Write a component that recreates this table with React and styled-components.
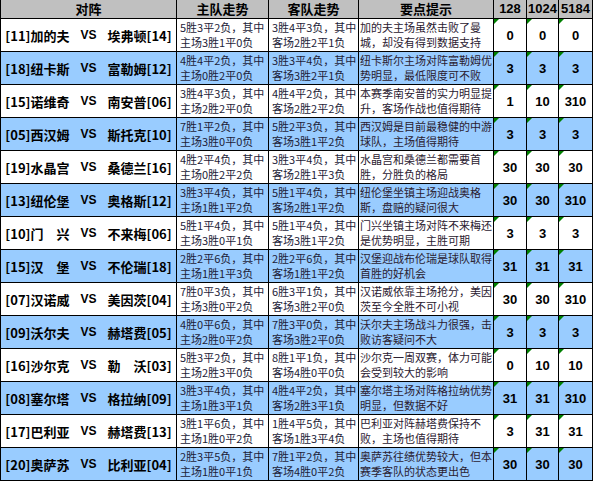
import React from "react";
import styled, { createGlobalStyle, css } from "styled-components";

const Global = createGlobalStyle`
  html, body { margin: 0; padding: 0; background: #fff; }
  body { font-family: "Noto Sans CJK SC", "Liberation Sans", sans-serif; }
`;

const Table = styled.div`
  width: 593px;
  box-sizing: border-box;
  display: flex;
  flex-direction: column;
  gap: 1px;
  background: #000;
  padding: 0 1px 1px 1px;
`;

const Row = styled.div`
  display: grid;
  grid-template-columns: 175px 91px 89px 134px 32px 31px 33px;
  column-gap: 1px;
  height: ${(p) => (p.$head ? "18px" : "32px")};
`;

const bgFor = (p) => (p.$head ? "#c0c0c0" : p.$blue ? "#99ccff" : "#ffffff");

const HeadCell = styled.div`
  background: #c0c0c0;
  display: flex;
  align-items: center;
  justify-content: center;
  font-weight: 700;
  font-size: 13px;
  line-height: 18px;
  color: #000;
  font-family: ${(p) => (p.$num ? '"Liberation Sans", Arial, sans-serif' : '"Noto Sans CJK SC", sans-serif')};
  ${(p) => p.$num && css`font-size: 13px;`}
`;

const TeamCell = styled.div`
  background: ${bgFor};
  display: grid;
  grid-template-columns: 1fr auto 1fr;
  column-gap: 11px;
  align-items: center;
  font-weight: 700;
  font-size: 13px;
  color: #000;
  font-family: "Noto Sans CJK SC", sans-serif;
  white-space: nowrap;
`;

const Home = styled.span`
  justify-self: end;
`;
const Vs = styled.span`
  font-family: "Liberation Sans", Arial, sans-serif;
  font-size: 12px;
`;
const Away = styled.span`
  justify-self: start;
`;

const TextCell = styled.div`
  background: ${bgFor};
  display: flex;
  flex-direction: column;
  justify-content: center;
  padding-left: ${(p) => (p.$tip ? "1px" : "3px")};
  font-size: 11px;
  line-height: 15px;
  color: ${(p) => (p.$tip ? "#2a2030" : "#1c1c38")};
  white-space: nowrap;
  overflow: hidden;
`;

const Line = styled.span`
  display: block;
  height: 15px;
`;

const NumCell = styled.div`
  position: relative;
  background: ${bgFor};
  display: flex;
  align-items: center;
  justify-content: center;
  font-family: "Liberation Sans", Arial, sans-serif;
  font-weight: 700;
  font-size: 13px;
  color: #000;
  &::before {
    content: "";
    position: absolute;
    top: 0;
    left: 0;
    border-top: 5px solid #008000;
    border-right: 5px solid transparent;
  }
`;

const data = [
  ["[11]加的夫", "埃弗顿[14]", ["5胜3平2负，其中", "主场3胜1平0负"], ["3胜4平3负，其中", "客场2胜2平1负"], ["加的夫主场虽然击败了曼", "城，却没有得到数据支持"], ["0", "0", "0"]],
  ["[18]纽卡斯", "富勒姆[12]", ["4胜4平2负，其中", "主场0胜2平0负"], ["3胜3平4负，其中", "客场3胜2平1负"], ["纽卡斯尔主场对阵富勒姆优", "势明显，最低限度可不败"], ["3", "3", "3"]],
  ["[15]诺维奇", "南安普[06]", ["3胜4平3负，其中", "主场2胜2平0负"], ["4胜4平2负，其中", "客场2胜2平2负"], ["本赛季南安普的实力明显提", "升，客场作战也值得期待"], ["1", "10", "310"]],
  ["[05]西汉姆", "斯托克[10]", ["7胜1平2负，其中", "主场3胜0平0负"], ["5胜2平3负，其中", "客场3胜1平2负"], ["西汉姆是目前最稳健的中游", "球队，主场值得期待"], ["3", "3", "3"]],
  ["[19]水晶宫", "桑德兰[16]", ["4胜2平4负，其中", "主场0胜2平2负"], ["3胜3平4负，其中", "客场2胜1平3负"], ["水晶宫和桑德兰都需要首", "胜，分胜负的格局"], ["30", "30", "30"]],
  ["[13]纽伦堡", "奥格斯[12]", ["3胜3平4负，其中", "主场1胜1平2负"], ["5胜1平4负，其中", "客场2胜1平2负"], ["纽伦堡坐镇主场迎战奥格", "斯，盘赔的疑问很大"], ["30", "30", "310"]],
  ["[10]门\u3000兴", "不来梅[06]", ["5胜1平4负，其中", "主场3胜0平1负"], ["5胜1平4负，其中", "客场3胜1平2负"], ["门兴坐镇主场对阵不来梅还", "是优势明显，主胜可期"], ["3", "3", "3"]],
  ["[15]汉\u3000堡", "不伦瑞[18]", ["2胜2平6负，其中", "主场1胜1平3负"], ["2胜2平6负，其中", "客场1胜1平2负"], ["汉堡迎战布伦瑞是球队取得", "首胜的好机会"], ["31", "31", "31"]],
  ["[07]汉诺威", "美因茨[04]", ["7胜0平3负，其中", "主场3胜0平2负"], ["6胜3平1负，其中", "客场3胜2平0负"], ["汉诺威依靠主场抢分，美因", "茨至今全胜不可小视"], ["30", "30", "310"]],
  ["[09]沃尔夫", "赫塔费[05]", ["4胜0平6负，其中", "主场2胜0平2负"], ["7胜3平0负，其中", "客场3胜2平0负"], ["沃尔夫主场战斗力很强，击", "败访客疑问不大"], ["3", "3", "3"]],
  ["[16]沙尔克", "勒\u3000沃[03]", ["5胜3平2负，其中", "主场2胜3平0负"], ["8胜1平1负，其中", "客场4胜0平0负"], ["沙尔克一周双赛，体力可能", "会受到较大的影响"], ["0", "10", "10"]],
  ["[08]塞尔塔", "格拉纳[09]", ["3胜3平4负，其中", "主场1胜3平1负"], ["4胜4平2负，其中", "客场2胜3平1负"], ["塞尔塔主场对阵格拉纳优势", "明显，但数据不好"], ["31", "31", "310"]],
  ["[17]巴利亚", "赫塔费[13]", ["3胜1平6负，其中", "主场1胜0平2负"], ["1胜4平5负，其中", "客场1胜3平4负"], ["巴利亚对阵赫塔费保持不", "败，主场也值得期待"], ["3", "31", "31"]],
  ["[20]奥萨苏", "比利亚[04]", ["2胜3平5负，其中", "主场1胜0平1负"], ["7胜1平2负，其中", "客场4胜0平2负"], ["奥萨苏往绩优势较大，但本", "赛季客队的状态更出色"], ["30", "30", "30"]],
];

export default function App() {
  return (
    <>
      <Global />
      <Table>
        <Row $head>
          <HeadCell>对阵</HeadCell>
          <HeadCell>主队走势</HeadCell>
          <HeadCell>客队走势</HeadCell>
          <HeadCell>要点提示</HeadCell>
          <HeadCell $num>128</HeadCell>
          <HeadCell $num>1024</HeadCell>
          <HeadCell $num>5184</HeadCell>
        </Row>
        {data.map(([home, away, ht, at, tip, nums], i) => {
          const blue = i % 2 === 1;
          return (
            <Row key={i}>
              <TeamCell $blue={blue}>
                <Home>{home}</Home>
                <Vs>VS</Vs>
                <Away>{away}</Away>
              </TeamCell>
              <TextCell $blue={blue}>
                <Line>{ht[0]}</Line>
                <Line>{ht[1]}</Line>
              </TextCell>
              <TextCell $blue={blue}>
                <Line>{at[0]}</Line>
                <Line>{at[1]}</Line>
              </TextCell>
              <TextCell $blue={blue} $tip>
                <Line>{tip[0]}</Line>
                <Line>{tip[1]}</Line>
              </TextCell>
              {nums.map((n, j) => (
                <NumCell key={j} $blue={blue}>{n}</NumCell>
              ))}
            </Row>
          );
        })}
      </Table>
    </>
  );
}
